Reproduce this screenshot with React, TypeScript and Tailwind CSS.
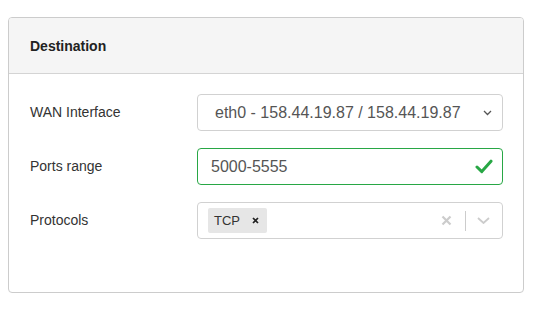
import React from "react";

function Row({ label, children }: { label: string; children: React.ReactNode }) {
  return (
    <div className="flex items-center">
      <label className="w-[167px] text-[14px] text-[#333]">{label}</label>
      <div className="w-[306px]">{children}</div>
    </div>
  );
}

function App() {
  return (
    <div className="w-[548px] h-[312px] bg-white pt-[17px] pl-[8px]" style={{ fontFamily: '"Liberation Sans", Arial, sans-serif' }}>
      <div className="w-[516px] h-[276px] border border-[#cccccc] rounded-[4px] overflow-hidden">
        <div className="h-[56px] bg-[#f5f5f5] border-b border-[#d4d4d4] flex items-center pl-[21px] pt-[2px]">
          <h3 className="text-[14px] font-bold text-[#222]">Destination</h3>
        </div>
        <div className="pl-[21px] pt-[20px] flex flex-col gap-[17px]">
          <Row label="WAN Interface">
            <div className="h-[37px] border border-[#d1d1d1] rounded-[4px] flex items-center pl-[17px] pr-[10px] justify-between">
              <span className="text-[16px] text-[#555]">eth0 - 158.44.19.87 / 158.44.19.87</span>
              <svg width="9" height="6" viewBox="0 0 9 6" className="text-[#555]">
                <path d="M1 1l3.5 3.5L8 1" fill="none" stroke="currentColor" strokeWidth="1.3" />
              </svg>
            </div>
          </Row>
          <Row label="Ports range">
            <div className="h-[37px] border border-[#28a745] rounded-[4px] flex items-center pl-[13px] pr-[9px] justify-between">
              <span className="text-[16px] text-[#555]">5000-5555</span>
              <svg width="18" height="15" viewBox="0 0 18 15" className="text-[#28a745]">
                <path d="M2 8l4.8 4.6L16 2.2" fill="none" stroke="currentColor" strokeWidth="3" strokeLinecap="round" strokeLinejoin="round" />
              </svg>
            </div>
          </Row>
          <Row label="Protocols">
            <div className="h-[37px] border border-[#d1d1d1] rounded-[4px] flex items-center pl-[10px] pr-[12px]">
              <div className="flex items-center h-[25px] bg-[#e6e6e6] rounded-[2px] pl-[6px] pr-[8px] gap-[12px]">
                <span className="text-[13px] text-[#333]">TCP</span>
                <svg width="7" height="7" viewBox="0 0 7 7" className="text-[#222]">
                  <path d="M1 1l5 5M6 1l-5 5" stroke="currentColor" strokeWidth="1.7" />
                </svg>
              </div>
              <div className="flex-1" />
              <svg width="11" height="11" viewBox="0 0 11 11" className="text-[#cccccc]">
                <path d="M1.5 1.5l8 8M9.5 1.5l-8 8" stroke="currentColor" strokeWidth="2.2" />
              </svg>
              <div className="w-px h-[20px] bg-[#cccccc] ml-[13px] mr-[11px]" />
              <svg width="13" height="7" viewBox="0 0 13 7" className="text-[#cccccc]">
                <path d="M1 1l5.5 5L12 1" fill="none" stroke="currentColor" strokeWidth="1.8" />
              </svg>
            </div>
          </Row>
        </div>
      </div>
    </div>
  );
}

export default App;
